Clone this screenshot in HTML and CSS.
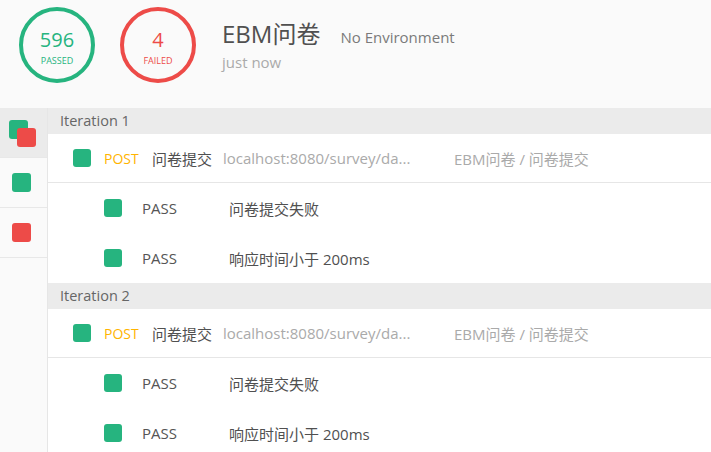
FILE: index.html
```html
<!DOCTYPE html>
<html lang="zh">
<head>
<meta charset="utf-8">
<title>EBM问卷 Runner</title>
<link rel="stylesheet" href="styles.css">
</head>
<body>
<header class="summary">
  <div class="ring ring-pass">
    <span class="ring-num">596</span>
    <span class="ring-label">PASSED</span>
  </div>
  <div class="ring ring-fail">
    <span class="ring-num">4</span>
    <span class="ring-label">FAILED</span>
  </div>
  <div class="meta">
    <div class="meta-top">
      <span class="title">EBM问卷</span>
      <span class="env">No Environment</span>
    </div>
    <div class="time">just now</div>
  </div>
</header>
<main class="body">
  <nav class="side">
    <div class="side-item active">
      <span class="sq sq-green sq-back"></span>
      <span class="sq sq-red sq-front"></span>
    </div>
    <div class="side-item"><span class="sq sq-green"></span></div>
    <div class="side-item"><span class="sq sq-red"></span></div>
  </nav>
  <section class="content">
    <div class="iter">Iteration 1</div>
    <div class="req">
      <span class="sq sq-green"></span>
      <span class="method">POST</span>
      <span class="name">问卷提交</span>
      <span class="url">localhost:8080/survey/da...</span>
      <span class="crumb">EBM问卷 / 问卷提交</span>
    </div>
    <div class="test"><span class="sq sq-green"></span><span class="status">PASS</span><span class="tname">问卷提交失败</span></div>
    <div class="test"><span class="sq sq-green"></span><span class="status">PASS</span><span class="tname">响应时间小于 200ms</span></div>
    <div class="iter">Iteration 2</div>
    <div class="req">
      <span class="sq sq-green"></span>
      <span class="method">POST</span>
      <span class="name">问卷提交</span>
      <span class="url">localhost:8080/survey/da...</span>
      <span class="crumb">EBM问卷 / 问卷提交</span>
    </div>
    <div class="test"><span class="sq sq-green"></span><span class="status">PASS</span><span class="tname">问卷提交失败</span></div>
    <div class="test"><span class="sq sq-green"></span><span class="status">PASS</span><span class="tname">响应时间小于 200ms</span></div>
  </section>
</main>
</body>
</html>
```
FILE: styles.css
```css
* { box-sizing: border-box; }
html, body { margin: 0; padding: 0; }
body {
  width: 711px;
  height: 452px;
  overflow: hidden;
  background: #fff;
  font-family: "Open Sans", "Noto Sans CJK SC", sans-serif;
  color: #505050;
}
.summary {
  height: 108px;
  background: #fafafa;
  display: flex;
  align-items: flex-start;
  padding: 7px 0 0 19px;
}
.ring {
  width: 76px;
  height: 76px;
  border: 4px solid;
  border-radius: 50%;
  display: flex;
  flex-direction: column;
  align-items: center;
}
.ring-pass { border-color: #26b47f; color: #26b47f; }
.ring-fail { border-color: #ed4b48; color: #ed4b48; margin-left: 25px; }
.ring-num {
  font-size: 20px;
  line-height: 24px;
  margin-top: 17px;
}
.ring-label {
  font-size: 9px;
  line-height: 12px;
  margin-top: 3px;
}
.meta { margin-left: 26px; margin-top: 12px; }
.meta-top { display: flex; align-items: baseline; line-height: 30px; height: 30px; }
.title { font-size: 24px; color: #505050; }
.env { font-size: 15px; color: #7a7a7a; margin-left: 20px; }
.time { font-size: 15px; line-height: 20px; color: #aaa; margin-top: 3px; }

.body { display: flex; }
.side {
  width: 48px;
  flex: none;
  background: #fafafa;
  border-right: 1px solid #e6e6e6;
  min-height: 344px;
}
.side-item {
  height: 50px;
  border-bottom: 1px solid #e8e8e8;
  display: flex;
  align-items: center;
  padding-left: 12px;
  position: relative;
}
.side-item.active { background: #ebebeb; }
.sq {
  display: inline-block;
  width: 18px;
  height: 18px;
  border-radius: 3px;
  flex: none;
}
.side .sq { width: 19px; height: 19px; }
.sq-green { background: #26b47f; }
.sq-red { background: #ed4b48; }
.sq-back { position: absolute; left: 9px; top: 12px; }
.sq-front { position: absolute; left: 17px; top: 20px; }

.content { flex: 1; min-width: 0; }
.iter {
  height: 26px;
  background: #ebebeb;
  font-size: 14.5px;
  line-height: 26px;
  color: #666;
  padding-left: 12px;
}
.req {
  height: 49px;
  border-bottom: 1px solid #e6e6e6;
  display: flex;
  align-items: center;
  padding-left: 25px;
  font-size: 15px;
  white-space: nowrap;
}
.method { color: #ffb400; font-size: 14px; margin-left: 13px; width: 48px; }
.name { color: #505050; width: 71px; }
.url { color: #aaa; width: 231px; }
.crumb { color: #aaa; }
.test {
  height: 50px;
  display: flex;
  align-items: center;
  padding-left: 56px;
  font-size: 15px;
  white-space: nowrap;
}
.status { margin-left: 20px; width: 87px; color: #555; }
.tname { color: #505050; }
```
